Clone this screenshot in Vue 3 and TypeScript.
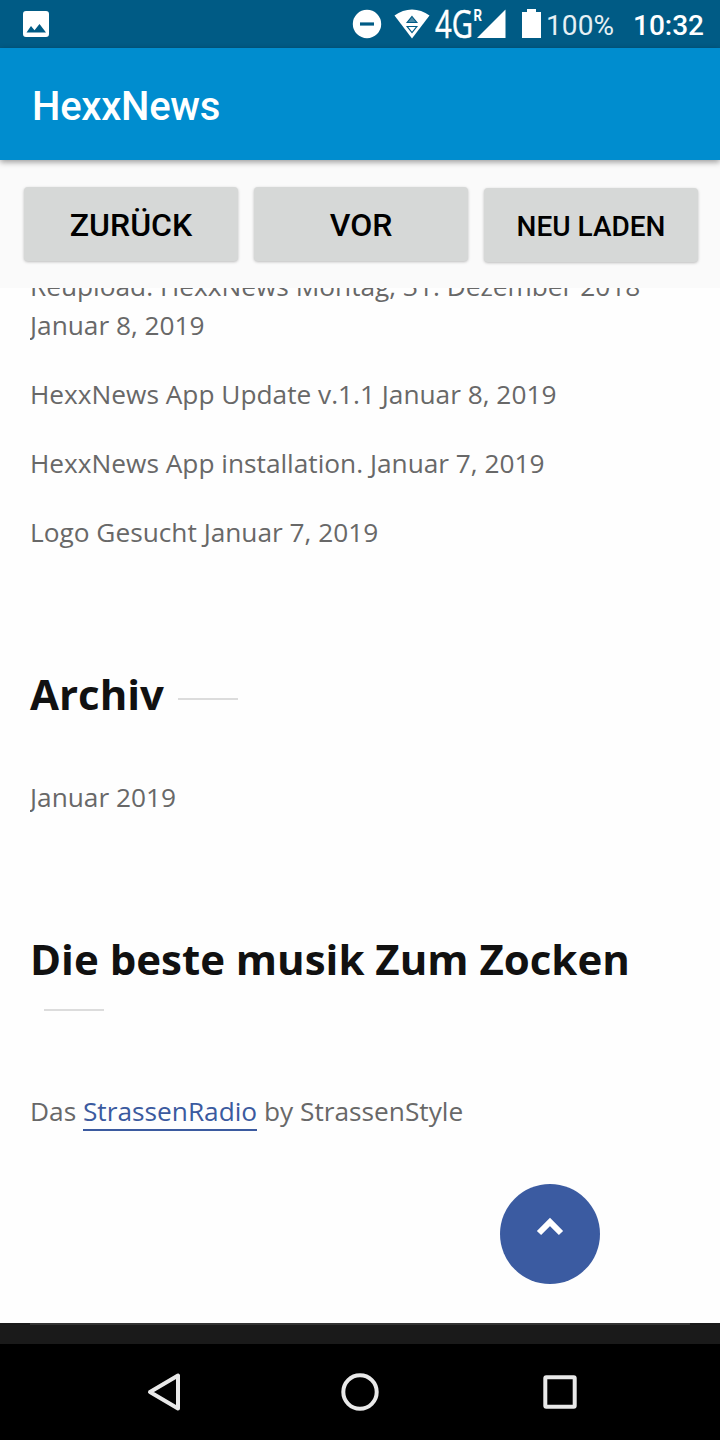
<script setup lang="ts">
interface Post {
  title: string
  date: string
}

const actions: { label: string; small?: boolean }[] = [
  { label: 'ZURÜCK' },
  { label: 'VOR' },
  { label: 'NEU LADEN', small: true },
]

const posts: Post[] = [
  { title: 'Reupload: HexxNews Montag, 31. Dezember 2018', date: 'Januar 8, 2019' },
  { title: 'HexxNews App Update v.1.1', date: 'Januar 8, 2019' },
  { title: 'HexxNews App installation.', date: 'Januar 7, 2019' },
  { title: 'Logo Gesucht', date: 'Januar 7, 2019' },
]
</script>

<template>
  <div class="screen">
    <div class="status">
      <svg class="status-icons" width="720" height="48" viewBox="0 0 720 48">
        <path fill="#fff" fill-rule="evenodd" d="M26 11h20a3 3 0 0 1 3 3v20a3 3 0 0 1-3 3H26a3 3 0 0 1-3-3V14a3 3 0 0 1 3-3zM26.500 32.500h19.500l-6.500-8.500-5 6.200-3.500-4.200z" />
        <circle cx="367" cy="24" r="14.200" fill="#fff" />
        <path d="M360 24h14" stroke="#005b85" stroke-width="3.200" />
        <path fill="#fff" d="M394.500 15.500C405 7.500 419 7.500 429.500 15.500L412 38.500z" />
        <path d="M412 16.500l4.800 6h-9.600z" fill="#4d8ca9" stroke="#005b85" stroke-width="1.200" />
        <path d="M407.200 26.500h9.600L412 32.500z" fill="#fff" stroke="#005b85" stroke-width="1.200" />
        <text class="net" x="435" y="38" textLength="38" lengthAdjust="spacingAndGlyphs">4G</text>
        <text class="roam" x="473.500" y="21" textLength="8.500" lengthAdjust="spacingAndGlyphs">R</text>
        <path fill="#fff" d="M477 38L505.500 9.500V38zM522 12h5V9h9v3h5v26h-19z" />
        <text class="battery" x="546" y="35" textLength="68" lengthAdjust="spacing">100%</text>
        <text class="clock" x="633" y="35" textLength="71" lengthAdjust="spacing">10:32</text>
      </svg>
    </div>

    <header class="app-bar"><h1>HexxNews</h1></header>

    <div class="toolbar">
      <button v-for="a in actions" :key="a.label" type="button" :class="{ small: a.small }">{{ a.label }}</button>
    </div>

    <main class="page">
      <ul class="posts">
        <li v-for="p in posts" :key="p.title">{{ p.title }} {{ p.date }}</li>
      </ul>
      <h2 class="archive-title">Archiv</h2>
      <p class="archive">Januar 2019</p>
      <h2 class="music-title">Die beste musik Zum Zocken</h2>
      <p class="radio">Das <a>StrassenRadio</a> by StrassenStyle</p>
      <div class="to-top">
        <svg width="100" height="100" viewBox="0 0 100 100">
          <path d="M39 49L50 38l11 11" fill="none" stroke="#fff" stroke-width="6" />
        </svg>
      </div>
      <footer class="footer"><div></div></footer>
    </main>

    <nav class="system-nav">
      <svg width="720" height="96" viewBox="0 0 720 96" fill="none" stroke="#e9e9e9" stroke-width="4" stroke-linejoin="round">
        <path d="M178 31.500v33L150 48z" />
        <circle cx="360" cy="48" r="16.700" />
        <rect x="545.300" y="33.300" width="29.400" height="29.400" rx="1" />
      </svg>
    </nav>
  </div>
</template>

<style>
body {
  margin: 0;
}
</style>

<style scoped>
.screen {
  width: 720px;
  height: 1440px;
  display: flex;
  flex-direction: column;
  overflow: hidden;
  background: #fefefe;
  font-family: 'Open Sans', 'Noto Sans', sans-serif;
}
.status {
  height: 48px;
  flex: none;
  background: #005b85;
}
svg {
  display: block;
}
.status-icons text {
  fill: #fff;
  font-family: Roboto, sans-serif;
}
.status-icons .net {
  font-family: 'Open Sans', sans-serif;
  font-size: 38px;
  stroke: #fff;
  stroke-width: 0.5px;
}
.status-icons .roam {
  font-size: 16px;
  font-weight: 700;
}
.status-icons .battery {
  font-size: 28px;
  fill: #e6f0f4;
}
.status-icons .clock {
  font-size: 28px;
  font-weight: 500;
}
.app-bar {
  height: 112px;
  flex: none;
  box-sizing: border-box;
  padding: 35px 32px 0;
  background: #008dcf;
  box-shadow: 0 2px 6px rgba(0, 0, 0, 0.4);
  position: relative;
  z-index: 1;
}
h1 {
  margin: 0;
  font: 500 40px/48px Roboto, sans-serif;
  letter-spacing: -0.25px;
  color: #fff;
}
.toolbar {
  height: 128px;
  flex: none;
  box-sizing: border-box;
  padding: 27px 22px 0 24px;
  display: flex;
  align-items: flex-start;
  gap: 16px;
  background: #fafafa;
}
button {
  flex: 1;
  box-sizing: border-box;
  height: 74px;
  padding: 2px 0 0;
  border: 0;
  border-radius: 4px;
  background: #d6d8d7;
  box-shadow: 0 1px 3px rgba(0, 0, 0, 0.25);
  color: #000;
  font: 500 32px/72px Roboto, sans-serif;
}
button.small {
  margin-top: 1px;
  padding-top: 4px;
  font-size: 28px;
  line-height: 70px;
}
.page {
  height: 1056px;
  flex: none;
  display: flex;
  flex-direction: column;
  overflow: hidden;
  color: #686868;
  font-size: 26.25px;
  line-height: 39px;
}
.posts {
  margin: -21px 30px 0;
  padding: 0;
  list-style: none;
}
li,
p {
  flex: none;
  overflow: hidden;
}
li + li {
  margin-top: 30px;
}
h2 {
  margin: 0 30px;
  color: #111;
  font-size: 42px;
  font-weight: 700;
  line-height: 46px;
}
h2::after {
  content: '';
  display: inline-block;
  width: 60px;
  height: 2px;
  margin-left: 14px;
  vertical-align: 10px;
  background: #dcdcdc;
}
.archive-title {
  margin-top: 119px;
}
p {
  margin: 61px 30px 0;
}
.music-title {
  margin-top: 119px;
}
.radio {
  margin-top: 64px;
}
.radio a {
  color: #3b5a9f;
  border-bottom: 2px solid #3b5a9f;
}
.to-top {
  width: 100px;
  height: 100px;
  flex: none;
  margin: auto 120px 39px auto;
  border-radius: 50%;
  background: #3b5ba1;
}
.footer {
  height: 21px;
  flex: none;
  padding: 0 30px;
  background: #1a1a1a;
}
.footer div {
  height: 2px;
  background: #333;
}
.system-nav {
  height: 96px;
  flex: none;
  background: #000;
}
</style>
